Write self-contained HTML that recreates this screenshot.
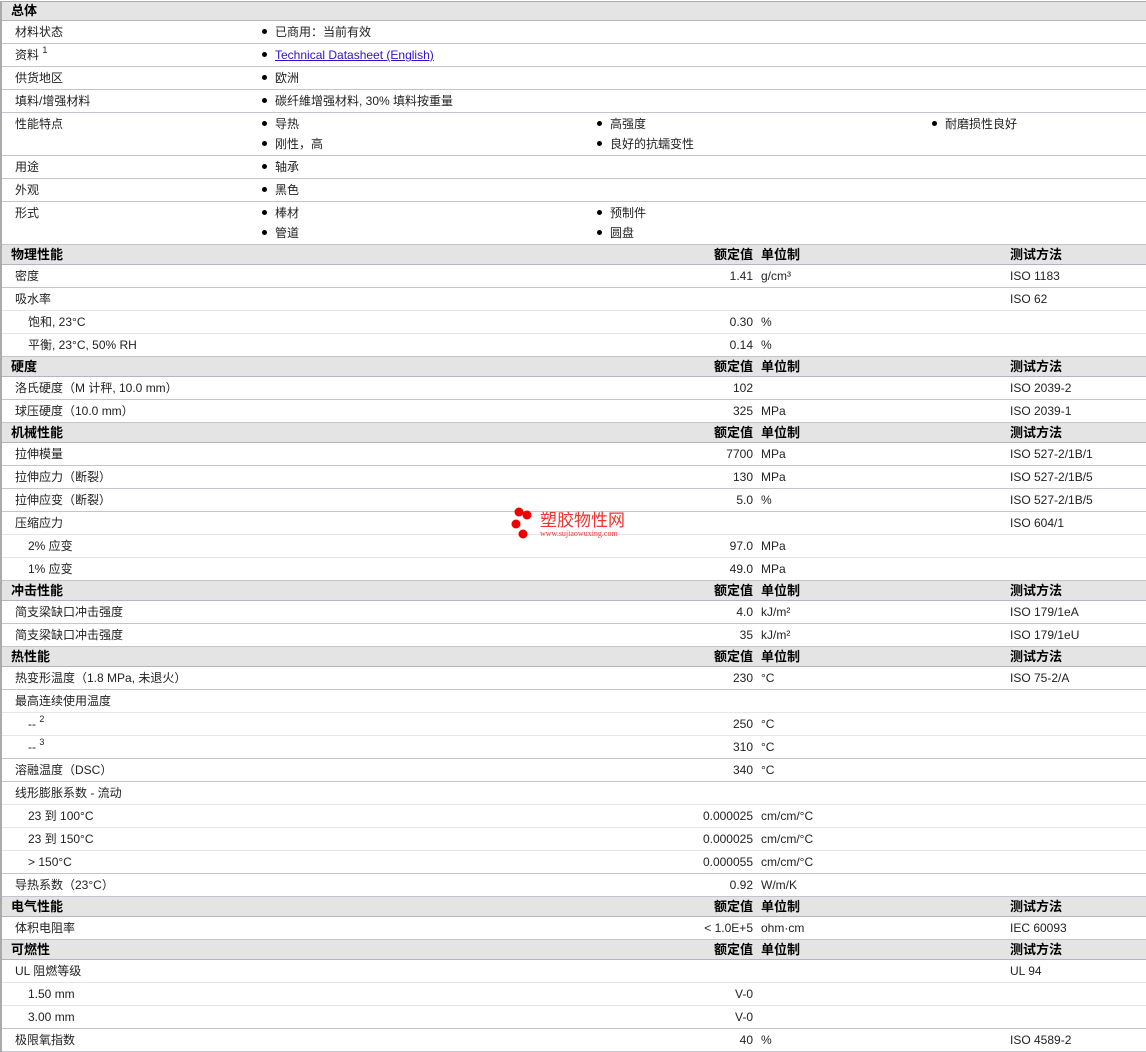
<!DOCTYPE html>
<html><head><meta charset="utf-8"><style>
body{margin:0;width:1146px;height:1050px;overflow:hidden;background:#fff;font-family:"Liberation Sans","Noto Sans CJK SC",sans-serif;font-size:12px;color:#222;position:relative}
#wrap{position:absolute;left:0;top:1px;width:1144px;border-left:2px solid #aaa;border-top:1px solid #aaa}
.r{position:relative;height:22px;line-height:22px;border-bottom:1px solid #c4c4cc}
.r.lt{border-bottom-color:#e6e6e6}
.r.d{height:42px}
.h{position:relative;height:19px;line-height:19px;background:#e4e4e4;border-bottom:1px solid #b4b4c4;font-weight:bold;font-size:13px;color:#000}
.r span,.h span{position:absolute;top:0;white-space:nowrap}
.l{left:13px}.ls{left:26px}
.v{right:393px;text-align:right}
.u{left:759px}.t{left:1008px}
.b1{left:260px}.b2{left:595px}.b3{left:930px}
.bl:before{content:"";display:inline-block;width:5px;height:5px;border-radius:50%;background:#000;margin-right:8px;vertical-align:2px}
.r2{top:20px!important}
a{color:#3311cc;text-decoration:underline}
sup{font-size:9px;vertical-align:6px;line-height:0}
#wm{position:absolute;left:510px;top:507px;width:140px;height:34px}
</style></head><body>
<div id="wrap">
<div class="h" style="height:18px;line-height:18px"><span class="l" style="left:9px">总体</span></div>
<div class="r"><span class="l">材料状态</span><span class="b1 bl">已商用：当前有效</span></div>
<div class="r"><span class="l">资料 <sup>1</sup></span><span class="b1 bl"><a>Technical Datasheet (English)</a></span></div>
<div class="r"><span class="l">供货地区</span><span class="b1 bl">欧洲</span></div>
<div class="r"><span class="l">填料/增强材料</span><span class="b1 bl">碳纤維增强材料, 30% 填料按重量</span></div>
<div class="r d"><span class="l">性能特点</span><span class="b1 bl">导热</span><span class="b2 bl">高强度</span><span class="b3 bl">耐磨损性良好</span><span class="b1 bl r2">刚性，高</span><span class="b2 bl r2">良好的抗蠕变性</span></div>
<div class="r"><span class="l">用途</span><span class="b1 bl">轴承</span></div>
<div class="r"><span class="l">外观</span><span class="b1 bl">黑色</span></div>
<div class="r d"><span class="l">形式</span><span class="b1 bl">棒材</span><span class="b2 bl">预制件</span><span class="b1 bl r2">管道</span><span class="b2 bl r2">圆盘</span></div>
<div class="h"><span class="l" style="left:9px">物理性能</span><span class="v">额定值</span><span class="u">单位制</span><span class="t">测试方法</span></div>
<div class="r"><span class="l">密度</span><span class="v">1.41</span><span class="u">g/cm³</span><span class="t">ISO 1183</span></div>
<div class="r lt"><span class="l">吸水率</span><span class="t">ISO 62</span></div>
<div class="r lt"><span class="ls">饱和, 23°C</span><span class="v">0.30</span><span class="u">%</span></div>
<div class="r"><span class="ls">平衡, 23°C, 50% RH</span><span class="v">0.14</span><span class="u">%</span></div>
<div class="h"><span class="l" style="left:9px">硬度</span><span class="v">额定值</span><span class="u">单位制</span><span class="t">测试方法</span></div>
<div class="r"><span class="l">洛氏硬度（M 计秤, 10.0 mm）</span><span class="v">102</span><span class="t">ISO 2039-2</span></div>
<div class="r"><span class="l">球压硬度（10.0 mm）</span><span class="v">325</span><span class="u">MPa</span><span class="t">ISO 2039-1</span></div>
<div class="h"><span class="l" style="left:9px">机械性能</span><span class="v">额定值</span><span class="u">单位制</span><span class="t">测试方法</span></div>
<div class="r"><span class="l">拉伸模量</span><span class="v">7700</span><span class="u">MPa</span><span class="t">ISO 527-2/1B/1</span></div>
<div class="r"><span class="l">拉伸应力（断裂）</span><span class="v">130</span><span class="u">MPa</span><span class="t">ISO 527-2/1B/5</span></div>
<div class="r"><span class="l">拉伸应变（断裂）</span><span class="v">5.0</span><span class="u">%</span><span class="t">ISO 527-2/1B/5</span></div>
<div class="r lt"><span class="l">压缩应力</span><span class="t">ISO 604/1</span></div>
<div class="r lt"><span class="ls">2% 应变</span><span class="v">97.0</span><span class="u">MPa</span></div>
<div class="r"><span class="ls">1% 应变</span><span class="v">49.0</span><span class="u">MPa</span></div>
<div class="h"><span class="l" style="left:9px">冲击性能</span><span class="v">额定值</span><span class="u">单位制</span><span class="t">测试方法</span></div>
<div class="r"><span class="l">简支梁缺口冲击强度</span><span class="v">4.0</span><span class="u">kJ/m²</span><span class="t">ISO 179/1eA</span></div>
<div class="r"><span class="l">简支梁缺口冲击强度</span><span class="v">35</span><span class="u">kJ/m²</span><span class="t">ISO 179/1eU</span></div>
<div class="h"><span class="l" style="left:9px">热性能</span><span class="v">额定值</span><span class="u">单位制</span><span class="t">测试方法</span></div>
<div class="r"><span class="l">热变形温度（1.8 MPa, 未退火）</span><span class="v">230</span><span class="u">°C</span><span class="t">ISO 75-2/A</span></div>
<div class="r lt"><span class="l">最高连续使用温度</span></div>
<div class="r lt"><span class="ls">-- <sup>2</sup></span><span class="v">250</span><span class="u">°C</span></div>
<div class="r"><span class="ls">-- <sup>3</sup></span><span class="v">310</span><span class="u">°C</span></div>
<div class="r"><span class="l">溶融温度（DSC）</span><span class="v">340</span><span class="u">°C</span></div>
<div class="r lt"><span class="l">线形膨胀系数 - 流动</span></div>
<div class="r lt"><span class="ls">23 到 100°C</span><span class="v">0.000025</span><span class="u">cm/cm/°C</span></div>
<div class="r lt"><span class="ls">23 到 150°C</span><span class="v">0.000025</span><span class="u">cm/cm/°C</span></div>
<div class="r"><span class="ls">&gt; 150°C</span><span class="v">0.000055</span><span class="u">cm/cm/°C</span></div>
<div class="r"><span class="l">导热系数（23°C）</span><span class="v">0.92</span><span class="u">W/m/K</span></div>
<div class="h"><span class="l" style="left:9px">电气性能</span><span class="v">额定值</span><span class="u">单位制</span><span class="t">测试方法</span></div>
<div class="r"><span class="l">体积电阻率</span><span class="v">&lt; 1.0E+5</span><span class="u">ohm·cm</span><span class="t">IEC 60093</span></div>
<div class="h"><span class="l" style="left:9px">可燃性</span><span class="v">额定值</span><span class="u">单位制</span><span class="t">测试方法</span></div>
<div class="r lt"><span class="l">UL 阻燃等级</span><span class="t">UL 94</span></div>
<div class="r lt"><span class="ls">1.50 mm</span><span class="v">V-0</span></div>
<div class="r"><span class="ls">3.00 mm</span><span class="v">V-0</span></div>
<div class="r"><span class="l">极限氧指数</span><span class="v">40</span><span class="u">%</span><span class="t">ISO 4589-2</span></div>
</div>
<div id="wm">
<svg width="30" height="34" style="position:absolute;left:0;top:0"><circle cx="9" cy="5" r="4.5" fill="#e00"/><circle cx="17" cy="8" r="4.5" fill="#e00"/><circle cx="6" cy="17" r="4.5" fill="#e00"/><circle cx="13" cy="27" r="4.5" fill="#e00"/></svg>
<div style="position:absolute;left:30px;top:2px;font-size:17px;color:#e33;font-family:'Noto Sans CJK SC',sans-serif;line-height:20px">塑胶物性网</div>
<div style="position:absolute;left:30px;top:22px;font-size:8px;color:#e33;font-family:'Liberation Serif',serif">www.sujiaowuxing.com</div>
</div>
</body></html>
